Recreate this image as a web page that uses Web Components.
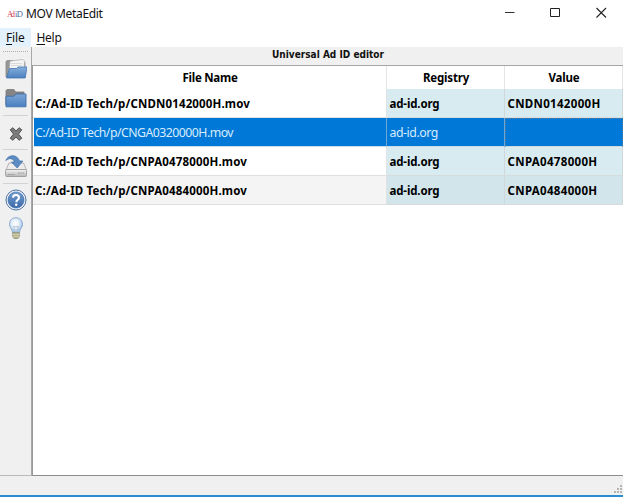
<!DOCTYPE html>
<html lang="en">
<head>
<meta charset="utf-8">
<title>MOV MetaEdit</title>
<style>
html,body{margin:0;height:100%;overflow:hidden;background:#fff}
</style>
</head>
<body>
<meta-window></meta-window>
<script>
const define = (name, html, init) => {
  const t = document.createElement('template');
  t.innerHTML = html;
  customElements.define(name, class extends HTMLElement {
    connectedCallback() {
      if (this.shadowRoot) return;
      this.attachShadow({mode: 'open'}).append(t.content.cloneNode(true));
      if (init) init(this, this.shadowRoot);
    }
  });
};

/* Text label whose tracking is adjusted so that it spans `w` pixels. */
define('ui-label', `<style>
:host{display:inline-block;white-space:pre}
span{display:inline-block}
</style><span><slot></slot></span>`, (el, root) => {
  const w = +el.getAttribute('w');
  const s = root.querySelector('span');
  const n = el.textContent.length;
  const cur = s.getBoundingClientRect().width;
  s.style.letterSpacing = ((w - cur) / n).toFixed(3) + 'px';
});

define('title-bar', `<style>
:host{display:flex;align-items:center;height:28px;background:#fff;font-size:12px;color:#111}
.logo{width:17px;height:12px;margin:0 2px 0 7px}
ui-label{line-height:16px;margin-top:-1px}
.buttons{margin-left:auto;display:flex;gap:0}
.buttons svg{display:block;width:46px;height:28px}
</style>
<svg class="logo" viewBox="0 0 17 12"><g font-family="Liberation Serif,serif" font-size="8.5"><text x="0" y="9" fill="#d64a5c" textLength="8">Ad</text><text x="8" y="9" fill="#4a6fa0" textLength="8">iD</text></g></svg>
<ui-label w="76.500">MOV MetaEdit</ui-label>
<div class="buttons">
<svg viewBox="0 0 46 28"><path d="M20 12.500h9.500" stroke="#333"/></svg>
<svg viewBox="0 0 46 28"><path d="M19.500 8.500h9v8h-9z" fill="none" stroke="#222"/></svg>
<svg viewBox="0 0 46 28"><path d="M19.500 8l9.500 9.500M29 8l-9.500 9.500" fill="none" stroke="#222" stroke-width="1.100"/></svg>
</div>`);

define('menu-bar', `<style>
:host{display:flex;height:19px;background:#fff;font-size:12px;line-height:20px;color:#111}
div{box-sizing:border-box;padding-left:6px}
div:first-of-type{background:#e3f1fd;width:30.500px}
u{text-underline-offset:1.500px;text-decoration-thickness:1px}
</style><div><ui-label w="18.500"><u>F</u>ile</ui-label></div><div><ui-label w="25"><u>H</u>elp</ui-label></div>`);

const icons = {
  open: `<defs><linearGradient id="a" x2="0" y2="1"><stop stop-color="#86afdd"/><stop offset="1" stop-color="#4b80be"/></linearGradient></defs>
<path d="M1 19V3.500l1-1h6l1 2h11V19z" fill="#969696" stroke="#858585" stroke-width=".8"/><path d="M4 14l1-11 13-1.500 1.500 1.500-.5 11z" fill="#f4f4f4" stroke="#aaa" stroke-width=".7"/><path d="M6 5.500h11M6 7.500h11" stroke="#d0d0d0" stroke-width=".7"/>
<path d="M1.500 20l3-9.500h7l1.500-1.500h9l-1.800 11z" fill="url(#a)" stroke="#4576b2" stroke-width=".8"/>`,
  folder: `<defs><linearGradient id="a" x2="0" y2="1"><stop stop-color="#7ba5d6"/><stop offset="1" stop-color="#4a80c0"/></linearGradient></defs>
<path d="M1 17V2.500l1-1h7l1.500 2.500H19v5H1z" fill="#858585" stroke="#777" stroke-width=".8"/><path d="M1 18.800V8.200h8L11 6h10v12.800z" fill="url(#a)" stroke="#4070ac" stroke-width=".9"/>`,
  remove: `<path d="M5.200 6.800l2.700-2.100L11 8l3.100-3.300 2.700 2.100L13.500 11l3.300 4.200-2.700 2.100L11 14l-3.100 3.300-2.700-2.100L8.500 11z" fill="#7b7b7b" stroke="#555" stroke-width="1"/>`,
  save: `<defs><linearGradient id="a" x2="0" y2="1"><stop stop-color="#f6f6f6"/><stop offset="1" stop-color="#b4b4b4"/></linearGradient></defs>
<path d="M1 15l3-7h14.500l3 7z" fill="#ededed" stroke="#a5a5a5" stroke-width=".8"/><rect x=".6" y="14.500" width="21" height="7" rx="1" fill="url(#a)" stroke="#939393" stroke-width=".8"/><path d="M3 19.500h7M13 18h6" stroke="#8d8d8d" stroke-width=".9" stroke-dasharray="1 .7"/>
<path d="M.8 5.500C3-.5 12-1.500 14.500 6h3.300l-5.600 7-5.800-6h3C8.300 3.200 4.500 2.600.8 5.500z" fill="#5d8cc4" stroke="#3f70ab" stroke-width=".7"/>`,
  help: `<defs><linearGradient id="a" x2="0" y2="1"><stop stop-color="#769fcf"/><stop offset="1" stop-color="#3a69a8"/></linearGradient></defs>
<circle cx="11" cy="11" r="10" fill="#f7f9fc" stroke="#4e74a5" stroke-width="1"/><circle cx="11" cy="11" r="8.100" fill="url(#a)" stroke="#3a69a8" stroke-width=".6"/>
<path d="M8 8.600c.2-3.500 6-3.300 6 .1 0 2.100-2.700 2.200-2.700 4.600" fill="none" stroke="#fff" stroke-width="2"/><circle cx="11.200" cy="15.800" r="1.250" fill="#fff"/>`,
  bulb: `<defs><radialGradient id="a" cx=".45" cy=".4"><stop stop-color="#fff"/><stop offset=".6" stop-color="#e4eef8"/><stop offset="1" stop-color="#a9c7e7"/></radialGradient></defs>
<path d="M7.500 15.500c0-3-3-4.500-3-8.300C4.500 3 7.400.7 11 .7s6.500 2.300 6.500 6.500c0 3.800-3 5.300-3 8.300z" fill="url(#a)" stroke="#88a8cc" stroke-width=".9"/><path d="M9.500 15l-.8-6 1.400 1.200L11 9l1 1.200L13.300 9l-.8 6" fill="none" stroke="#a9b8c8" stroke-width=".7"/><path d="M7.500 15.500h7v4L12.500 22h-3l-2-2.500z" fill="#b1af88" stroke="#8f9086" stroke-width=".7"/><path d="M7.500 17.300h7M7.800 19.300h6.500" stroke="#deddb8" stroke-width=".8"/>`
};
define('tool-icon', `<style>:host{display:block;width:22px;height:22px}svg{display:block;width:22px;height:22px}</style><div></div>`,
  (el, root) => { root.querySelector('div').innerHTML = `<svg viewBox="0 0 22 22">${icons[el.getAttribute('name')]}</svg>`; });

define('tool-bar', `<style>
:host{display:flex;flex-direction:column;box-sizing:border-box;width:32px;background:#f0f0f0;border-right:1px solid #a8a8a8;border-bottom:1px solid #b9b9b9;padding:4px 3px 0}
.grip{height:1px;margin-bottom:6px;background:repeating-linear-gradient(90deg,#b0b0b0 0 1px,#eee 1px 2px)}
hr{width:25px;height:1px;border:0;margin:0;background:#d2d2d2}
tool-icon{margin-left:2px;flex:none}
</style>
<div class="grip"></div>
<tool-icon name="open"></tool-icon>
<tool-icon name="folder" style="margin-top:8px"></tool-icon>
<hr style="margin-top:5px">
<tool-icon name="remove" style="margin-top:7px"></tool-icon>
<hr style="margin-top:4px">
<tool-icon name="save" style="margin-top:5px"></tool-icon>
<hr style="margin-top:6px">
<tool-icon name="help" style="margin-top:5px"></tool-icon>
<tool-icon name="bulb" style="margin-top:6px"></tool-icon>`);

define('file-row', `<style>
:host{display:grid;grid-template-columns:354px 118px 118px;height:29px;box-sizing:border-box;font-weight:700;font-size:11.500px;line-height:29px;color:#000}
div{box-sizing:border-box;height:29px;overflow:hidden;padding-left:2.500px;border-right:1px solid #cfd9dc;border-bottom:1px solid #d6dcde;background:#d7ebf1}
div:first-of-type{background:#fff;padding-left:2px;border-right-color:#dfe3e5;border-bottom-color:#e0e0e0}
:host([alt]) div{background:#d1e5eb}
:host([alt]) div:first-of-type{background:#f4f4f4}
:host([selected]){font-weight:400;font-size:12.300px;color:#d9ecfc}
:host([selected]) div{background:#0078d7;border-right-color:#6ea7d4;border-bottom-color:#c8dceb}
:host([selected]) div:first-of-type{background:#0078d7;border-left:1px solid #fff;padding-left:1px}
:host([selected]) div:last-of-type{border:1px dotted #5c7f9b;border-bottom:1px solid #d6d9da;padding:0}
</style><div class="f"></div><div class="r"></div><div class="v"></div>`, (el, root) => {
  for (const k of ['f', 'r', 'v']) {
    const text = el.getAttribute(k);
    if (!text) continue;
    const l = document.createElement('ui-label');
    l.setAttribute('w', el.getAttribute(k + 'w'));
    l.textContent = text;
    root.querySelector('.' + k).append(l);
  }
});

define('file-table', `<style>
:host{display:block;flex:1;box-sizing:border-box;background:#fff;border:1px solid #999;border-top-color:#a5a5a5;border-right:0;border-bottom-color:#8d8d8d;overflow:hidden}
.head{display:grid;grid-template-columns:354px 118px 118px;height:23px;font-size:11.500px;font-weight:700;line-height:24px;text-align:center;color:#000}
.head div{border-right:1px solid #e4e4e4;padding-left:1px;height:23px}
</style>
<div class="head"><div><ui-label w="55">File Name</ui-label></div><div><ui-label w="46">Registry</ui-label></div><div><ui-label w="31">Value</ui-label></div></div>
<file-row f="C:/Ad-ID Tech/p/CNDN0142000H.mov" fw="215" r="ad-id.org" rw="50" v="CNDN0142000H" vw="93"></file-row>
<file-row selected f="C:/Ad-ID Tech/p/CNGA0320000H.mov" fw="198" r="ad-id.org" rw="48.500"></file-row>
<file-row f="C:/Ad-ID Tech/p/CNPA0478000H.mov" fw="212" r="ad-id.org" rw="50" v="CNPA0478000H" vw="90"></file-row>
<file-row alt f="C:/Ad-ID Tech/p/CNPA0484000H.mov" fw="212" r="ad-id.org" rw="50" v="CNPA0484000H" vw="90"></file-row>`);

define('editor-pane', `<style>
:host{display:flex;flex-direction:column;flex:1;min-width:0;background:#f0f0f0}
header{height:18px;padding-left:1px;text-align:center;font:700 10px/16px "DejaVu Sans Condensed","DejaVu Sans",sans-serif;color:#111}
</style><header><ui-label w="112">Universal Ad ID editor</ui-label></header><file-table></file-table>`);

define('status-bar', `<style>
:host{display:flex;justify-content:flex-end;align-items:flex-end;box-sizing:border-box;height:21px;background:#f0f0f0;border-bottom:2px solid #2a8dcf}
svg{display:block;width:10px;height:10px}
</style><svg viewBox="0 0 10 10"><path d="M7 0h2v2H7zM4 3h2v2H4zM7 3h2v2H7zM1 6h2v2H1zM4 6h2v2H4zM7 6h2v2H7z" fill="#b5b5b5"/></svg>`);

define('meta-window', `<style>
:host{display:flex;flex-direction:column;width:623px;height:497px;overflow:hidden;background:#fff;font-family:"Noto Sans","Open Sans",sans-serif}
main{display:flex;flex:1;min-height:0}
</style><title-bar></title-bar><menu-bar></menu-bar><main><tool-bar></tool-bar><editor-pane></editor-pane></main><status-bar></status-bar>`);
</script>
</body>
</html>
